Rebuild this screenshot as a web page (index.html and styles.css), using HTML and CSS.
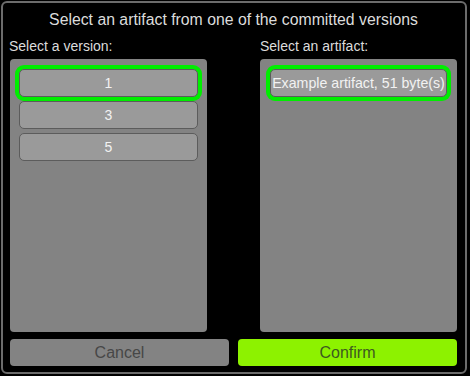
FILE: index.html
```html
<!DOCTYPE html>
<html>
<head>
<meta charset="utf-8">
<link rel="stylesheet" href="styles.css">
</head>
<body>
<div class="dialog">
  <div class="title">Select an artifact from one of the committed versions</div>
  <div class="columns">
    <div class="col">
      <div class="label label-left">Select a version:</div>
      <div class="panel panel-left">
        <div class="item selected">1</div>
        <div class="item">3</div>
        <div class="item">5</div>
      </div>
    </div>
    <div class="col">
      <div class="label">Select an artifact:</div>
      <div class="panel panel-right">
        <div class="item selected">Example artifact, 51 byte(s)</div>
      </div>
    </div>
  </div>
  <div class="actions">
    <button class="btn cancel">Cancel</button>
    <button class="btn confirm">Confirm</button>
  </div>
</div>
</body>
</html>
```
FILE: styles.css
```css
html, body {
  margin: 0;
  padding: 0;
  background: #000;
  width: 470px;
  height: 376px;
  overflow: hidden;
  font-family: "Liberation Sans", Arial, sans-serif;
}
.dialog {
  box-sizing: border-box;
  margin: 1px 0 0 1px;
  width: 466px;
  height: 373px;
  border: 2px solid #6c6c6c;
  border-radius: 6px;
  padding: 7px 8px 6px 7px;
  display: flex;
  flex-direction: column;
}
.title {
  height: 20px;
  line-height: 20px;
  font-size: 15.8px;
  color: #dcdcdc;
  text-align: center;
  margin-bottom: 8px;
}
.columns {
  display: grid;
  grid-template-columns: 197px 197px;
  column-gap: 53px;
  flex: 1;
}
.col {
  display: flex;
  flex-direction: column;
}
.label {
  height: 16px;
  line-height: 16px;
  font-size: 14px;
  color: #dcdcdc;
  margin-bottom: 5px;
}
.label-left {
  margin-left: -1px;
}
.panel {
  box-sizing: border-box;
  height: 273px;
  background: #838383;
  border-radius: 4px;
  padding: 10px 9px;
  display: flex;
  flex-direction: column;
  gap: 4px;
}
.panel-right {
  padding: 10px 10px;
}
.item {
  box-sizing: border-box;
  height: 28px;
  line-height: 26px;
  background: #9a9a9a;
  border: 1px solid #5c5c5c;
  border-radius: 5px;
  color: #f2f2f2;
  font-size: 14px;
  text-align: center;
  white-space: nowrap;
  overflow: visible;
}
.item.selected {
  box-shadow: 0 0 0 4px #00ee00;
}
.panel-right .item {
  font-size: 14.2px;
}
.actions {
  display: grid;
  grid-template-columns: 219px 219px;
  column-gap: 9px;
  margin-top: 7px;
}
.btn {
  height: 27px;
  border: none;
  border-radius: 4px;
  font-family: "Liberation Sans", Arial, sans-serif;
  font-size: 16px;
  padding: 0;
}
.cancel {
  background: #838383;
  color: #474747;
}
.confirm {
  background: #8df200;
  color: #3d5a20;
}
```
